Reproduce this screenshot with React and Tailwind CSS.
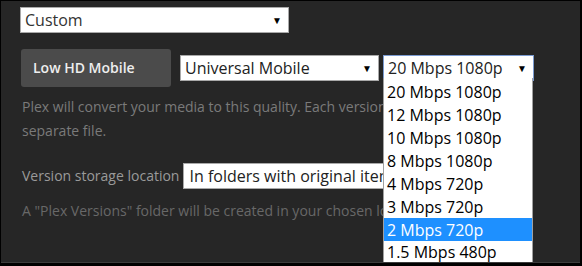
import React from "react";

function Arrow() {
  return <span className="text-[10px] text-black leading-none">▼</span>;
}

export default function App() {
  const items = [
    "20 Mbps 1080p",
    "12 Mbps 1080p",
    "10 Mbps 1080p",
    "8 Mbps 1080p",
    "4 Mbps 720p",
    "3 Mbps 720p",
    "2 Mbps 720p",
    "1.5 Mbps 480p",
  ];
  return (
    <div className="w-[582px] h-[266px] bg-black overflow-hidden font-['Open_Sans',sans-serif]">
      <div className="relative w-[579px] h-[262px] ml-px mt-px bg-[#262626] border-b border-[#3c3c3c] overflow-hidden">
        <div className="pl-[19px] pt-[6px] flex flex-col">
          <div className="w-[269px] h-[26px] bg-white border border-[#a9a9a9] flex items-center justify-between pl-[4px] pr-[6px]">
            <span className="text-[16px] text-[#333] leading-none">Custom</span>
            <Arrow />
          </div>
          <div className="mt-[16px] flex items-center">
            <div className="ml-[1px] w-[150px] h-[38px] rounded-[3px] bg-[#4b4b4b] flex items-center pl-[12px]">
              <span className="text-[14px] font-semibold text-[#eeeeee] leading-none">Low HD Mobile</span>
            </div>
            <div className="ml-[9px] w-[199px] h-[26px] bg-white border border-[#a9a9a9] flex items-center justify-between pl-[4px] pr-[6px]">
              <span className="text-[16px] text-[#222] leading-none">Universal Mobile</span>
              <Arrow />
            </div>
            <div className="ml-[4px] w-[151px] h-[26px] bg-white border border-[#7b9bd1] flex items-center justify-between pl-[4px] pr-[6px]">
              <span className="text-[16px] text-[#222] leading-none">20 Mbps 1080p</span>
              <Arrow />
            </div>
          </div>
          <div className="ml-[2px] mt-[8px] text-[14px] leading-[24px] text-[#7a7a7a] whitespace-nowrap">
            <div>Plex will convert your media to this quality. Each version will be stored as a</div>
            <div>separate file.</div>
          </div>
          <div className="ml-[2px] mt-[20px] flex items-center">
            <span className="text-[14px] text-[#9a9a9a] leading-none">Version storage location</span>
            <div className="ml-[4px] w-[260px] h-[26px] bg-white border border-[#a9a9a9] flex items-center pl-[5px] whitespace-nowrap overflow-hidden">
              <span className="text-[16px] text-[#222] leading-none">In folders with original items</span>
            </div>
          </div>
          <div className="ml-[2px] mt-[10px] text-[14px] leading-[24px] text-[#686868] whitespace-nowrap">
            A "Plex Versions" folder will be created in your chosen location.
          </div>
        </div>
        <div className="absolute left-[382px] top-[77px] w-[150px] h-[190px] bg-white border-x border-[#a0a0a0] flex flex-col pt-[3px]">
          {items.map((t, i) => (
            <div
              key={t}
              className={
                i === 6
                  ? "h-[22.86px] flex items-center pl-[3px] bg-[#1e90ff] text-white text-[16px] leading-none"
                  : "h-[22.86px] flex items-center pl-[3px] text-black text-[16px] leading-none"
              }
            >
              {t}
            </div>
          ))}
        </div>
      </div>
    </div>
  );
}
